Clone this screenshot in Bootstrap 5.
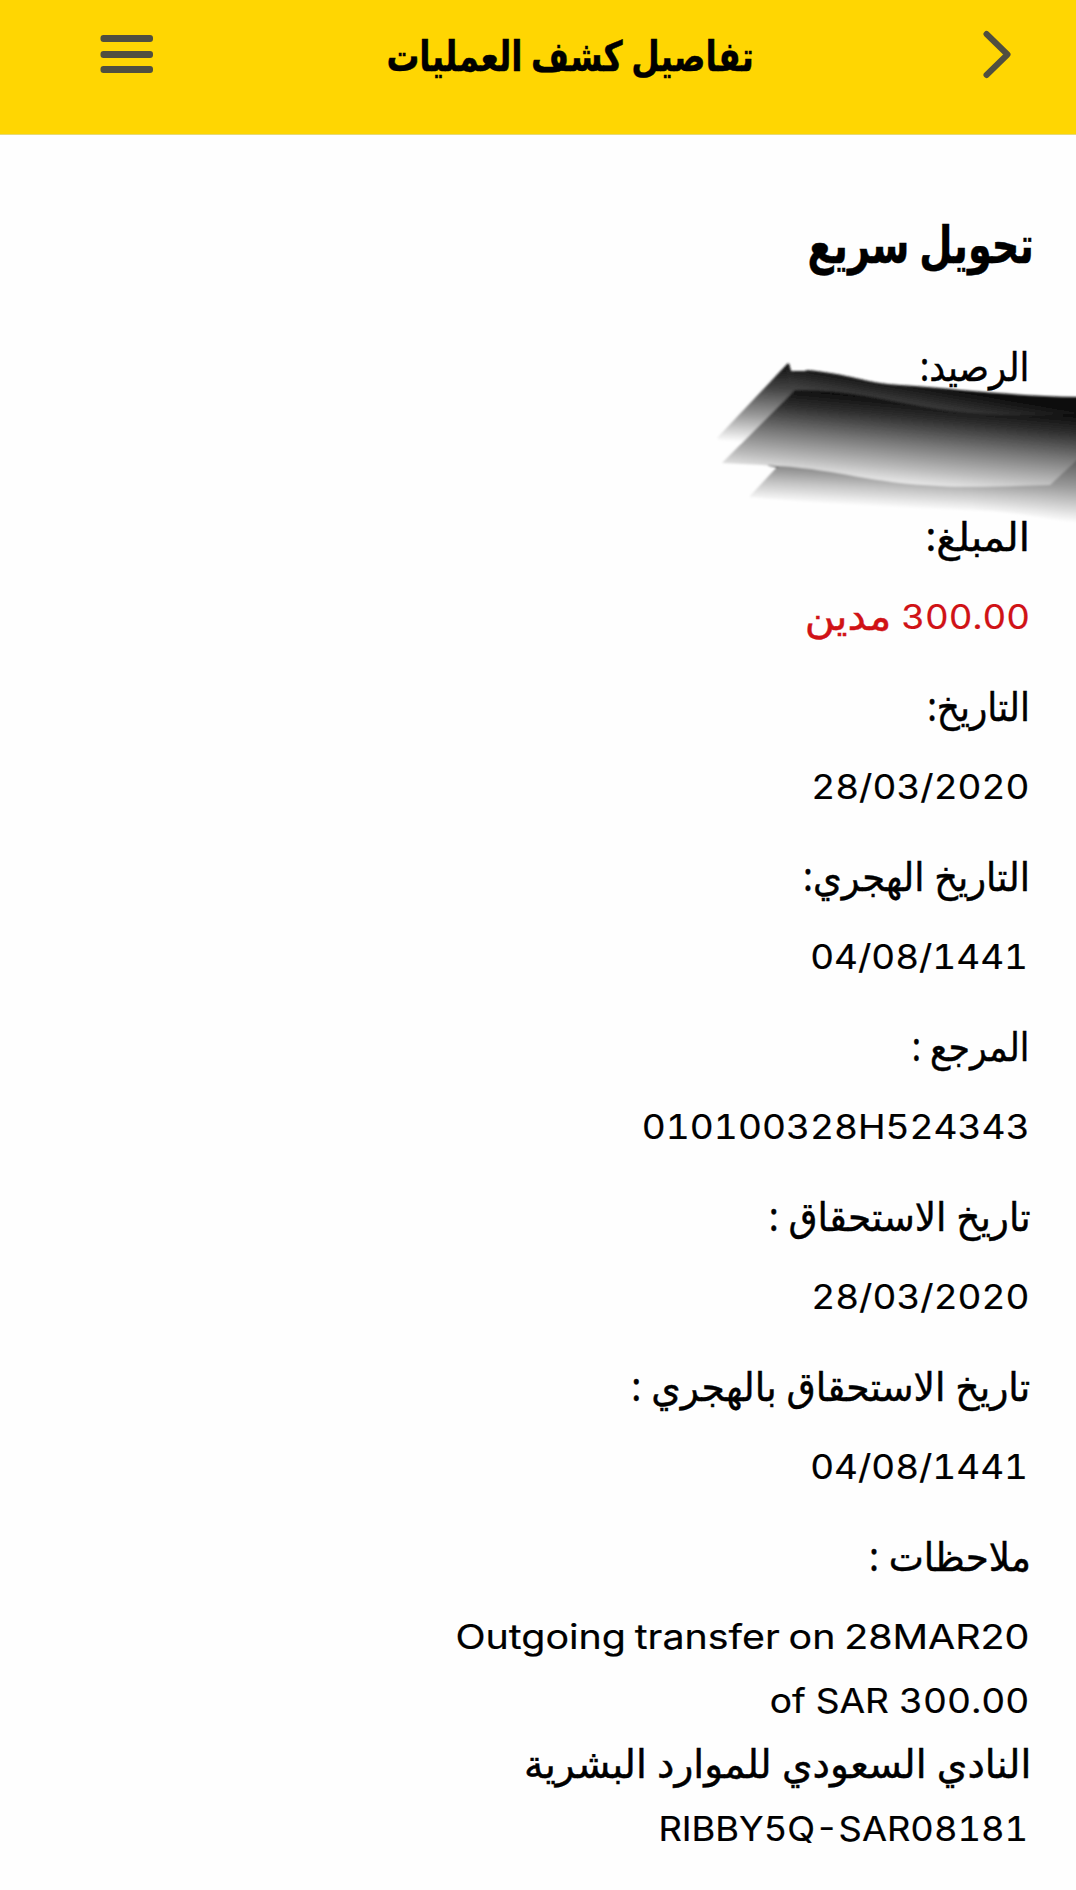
<!DOCTYPE html>
<html lang="ar" dir="rtl">
<head>
<meta charset="utf-8">
<meta name="viewport" content="width=device-width, initial-scale=1">
<title>تفاصيل كشف العمليات</title>
<link rel="stylesheet" href="https://cdn.jsdelivr.net/npm/bootstrap@5.3.0/dist/css/bootstrap.min.css">
<style>
  body { font-family: "Noto Sans", "DejaVu Sans", sans-serif; color: #000; background: #fefefe; overflow-x: hidden; }
  .app-bar { height: 135px; background: #ffd602; border-bottom: 1px solid #e6da78; padding: 24px 64px 0 100px; }
  .app-bar svg { display: block; }
  .app-title { font-size: 37px; line-height: 62px; padding-top: 2px; }
  .page-heading { font-size: 46px; line-height: 70px; padding-top: 75px; margin-bottom: 55px; height: 145px; }
  .details { padding: 0 48px; gap: 27px; font-size: 35px; }
  .entry { gap: 15px; position: relative; z-index: 1; }
  .line { height: 64px; line-height: 64px; white-space: nowrap; font-weight: 400; }
  .fit { display: inline-block; white-space: nowrap; transform-origin: 0 78%; --tall: 1.13; -webkit-text-stroke: .4px currentColor; }
  .line .fit { transform-origin: 0 58%; }
  .debit { color: #d01216; }
  .latin { direction: ltr; font-family: Inter, "Noto Sans", sans-serif; font-size: 34px; font-feature-settings: "tnum"; --tall: 1; -webkit-text-stroke: .2px currentColor; }
  .prose { font-feature-settings: normal; word-spacing: -2px; }
  .smudge { left: 700px; top: 350px; z-index: 0; }
</style>
</head>
<body>
<header class="app-bar d-flex justify-content-between align-items-start">
  <svg width="29" height="60" viewBox="0 0 29 60" fill="none" stroke="#504f40" stroke-width="6" stroke-linecap="round" stroke-linejoin="round"><path d="M3.500 10 24.500 30.500 3.500 51"/></svg>
  <h1 class="app-title fw-bold m-0"><span class="fit" data-left="388" data-right="752">تفاصيل كشف العمليات</span></h1>
  <svg width="53" height="60" viewBox="0 0 53 60" fill="#504f40"><rect x=".5" y="11" width="52.500" height="7" rx="3"/><rect x=".5" y="27" width="52.500" height="7" rx="3"/><rect x=".5" y="42" width="52.500" height="7" rx="3"/></svg>
</header>

<main class="position-relative">
  <h2 class="page-heading fw-bold px-5"><span class="fit" data-left="809" data-right="1031">تحويل سريع</span></h2>

  <section class="details d-flex flex-column">
    <div class="entry d-flex flex-column">
      <div class="line"><span class="fit" data-left="922" data-right="1027">الرصيد:</span></div>
      <div class="line"></div>
    </div>
    <div class="entry d-flex flex-column">
      <div class="line"><span class="fit" data-left="928" data-right="1027">المبلغ:</span></div>
      <div class="line debit"><span class="fit latin" data-left="903" data-right="1028">300.00</span> <span class="fit" data-left="807" data-right="888">مدين</span></div>
    </div>
    <div class="entry d-flex flex-column">
      <div class="line"><span class="fit" data-left="929" data-right="1027">التاريخ:</span></div>
      <div class="line"><span class="fit latin" data-left="813.500" data-right="1028">28/03/2020</span></div>
    </div>
    <div class="entry d-flex flex-column">
      <div class="line"><span class="fit" data-left="805" data-right="1027">التاريخ الهجري:</span></div>
      <div class="line"><span class="fit latin" data-left="812.500" data-right="1025">04/08/1441</span></div>
    </div>
    <div class="entry d-flex flex-column">
      <div class="line"><span class="fit" data-left="914" data-right="1027">المرجع :</span></div>
      <div class="line"><span class="fit latin" data-left="644" data-right="1027.500">010100328H524343</span></div>
    </div>
    <div class="entry d-flex flex-column">
      <div class="line"><span class="fit" data-left="771" data-right="1030">تاريخ الاستحقاق :</span></div>
      <div class="line"><span class="fit latin" data-left="813.500" data-right="1028">28/03/2020</span></div>
    </div>
    <div class="entry d-flex flex-column">
      <div class="line"><span class="fit" data-left="634" data-right="1030">تاريخ الاستحقاق بالهجري :</span></div>
      <div class="line"><span class="fit latin" data-left="812.500" data-right="1025">04/08/1441</span></div>
    </div>
    <div class="entry d-flex flex-column">
      <div class="line"><span class="fit" data-left="871" data-right="1028">ملاحظات :</span></div>
      <div>
        <div class="line"><span class="fit latin prose" data-left="458" data-right="1028">Outgoing transfer on 28MAR20</span></div>
        <div class="line"><span class="fit latin" data-left="771" data-right="1028">of SAR 300.00</span></div>
        <div class="line"><span class="fit" data-left="526" data-right="1028">النادي السعودي للموارد البشرية</span></div>
        <div class="line"><span class="fit latin" data-left="660.500" data-right="1025">RIBBY5Q-SAR08181</span></div>
      </div>
    </div>
  </section>
</main>

<!-- brushed-out balance -->
<svg class="smudge position-absolute" width="376" height="190" viewBox="700 350 376 190">
  <defs>
    <linearGradient id="gBack" gradientUnits="userSpaceOnUse" x1="780" y1="365" x2="776" y2="444"><stop offset="0" stop-color="#111"/><stop offset=".3" stop-color="#444"/><stop offset=".65" stop-color="#999"/><stop offset="1" stop-color="#fefefe"/></linearGradient>
    <linearGradient id="gBand" gradientUnits="userSpaceOnUse" x1="920" y1="383" x2="915" y2="412"><stop offset="0" stop-color="#0c0c0c"/><stop offset="1" stop-color="#484848"/></linearGradient>
    <linearGradient id="gFront" gradientUnits="userSpaceOnUse" x1="930" y1="403" x2="922" y2="487"><stop offset="0" stop-color="#101010"/><stop offset=".2" stop-color="#303030"/><stop offset=".5" stop-color="#777"/><stop offset=".8" stop-color="#bbb"/><stop offset="1" stop-color="#eee"/></linearGradient>
    <linearGradient id="gLow" gradientUnits="userSpaceOnUse" x1="900" y1="470" x2="898" y2="508"><stop offset="0" stop-color="#808080"/><stop offset=".5" stop-color="#c4c4c4"/><stop offset="1" stop-color="#fefefe"/></linearGradient>
    <linearGradient id="gSide" gradientUnits="userSpaceOnUse" x1="1070" y1="450" x2="1065" y2="522"><stop offset="0" stop-color="#484848"/><stop offset=".5" stop-color="#999"/><stop offset="1" stop-color="#fefefe"/></linearGradient>
    <linearGradient id="fadeX" x1="0" x2="1"><stop offset=".7" stop-color="#000"/><stop offset=".93" stop-color="#fff"/></linearGradient>
    <mask id="right" maskUnits="userSpaceOnUse" x="700" y="350" width="390" height="190"><rect x="700" y="350" width="390" height="190" fill="url(#fadeX)"/></mask>
    <filter id="soft" x="-5%" y="-10%" width="110%" height="120%"><feGaussianBlur stdDeviation=".9"/></filter>
  </defs>
  <g filter="url(#soft)">
    <path fill="url(#gLow)" d="M778 466 749 497Q850 506 960 510T1080 524V460Z"/>
    <path fill="url(#gSide)" mask="url(#right)" d="M960 480V508Q1020 513 1080 524V430Z"/>
    <path d="M768 465 778 467" stroke="#333" stroke-width="1.500"/>
    <path fill="url(#gBack)" d="M788 363 717 438 724 444 790 440 805 371 791 371Z"/>
    <path fill="url(#gBand)" d="M786 370 789 363 791 371 803 372 807 370C850 374 865 383 900 385 960 389 1010 396 1080 397V420L960 418 793 395Z"/>
    <path fill="url(#gFront)" d="M795 390C840 389 880 399 920 406 980 417 1030 417 1080 413V457L1050 485C1010 486 970 488 940 486 870 483 840 470 780 466L722 463Z"/>
  </g>
</svg>

<script src="https://cdn.jsdelivr.net/npm/bootstrap@5.3.0/dist/js/bootstrap.bundle.min.js"></script>
<script>
  // Stretch each text run horizontally so its ink spans its measured column.
  const ctx = document.createElement('canvas').getContext('2d');
  document.querySelectorAll('.fit').forEach(el => {
    const cs = getComputedStyle(el);
    ctx.font = `${cs.fontWeight} ${cs.fontSize} ${cs.fontFamily}`;
    ctx.direction = cs.direction;
    ctx.textAlign = 'left';
    const m = ctx.measureText(el.textContent);
    const box = el.getBoundingClientRect();
    const from = +el.dataset.left, to = +el.dataset.right;
    // The canvas ignores tabular figures and word spacing, so add the width they bring.
    const ink = m.actualBoundingBoxLeft + m.actualBoundingBoxRight + box.width - m.width;
    const s = (to - from) / ink;
    const shift = from - box.left + m.actualBoundingBoxLeft * s;
    el.style.transform = `translateX(${shift}px) scale(${s}, var(--tall))`;
  });
</script>
</body>
</html>
